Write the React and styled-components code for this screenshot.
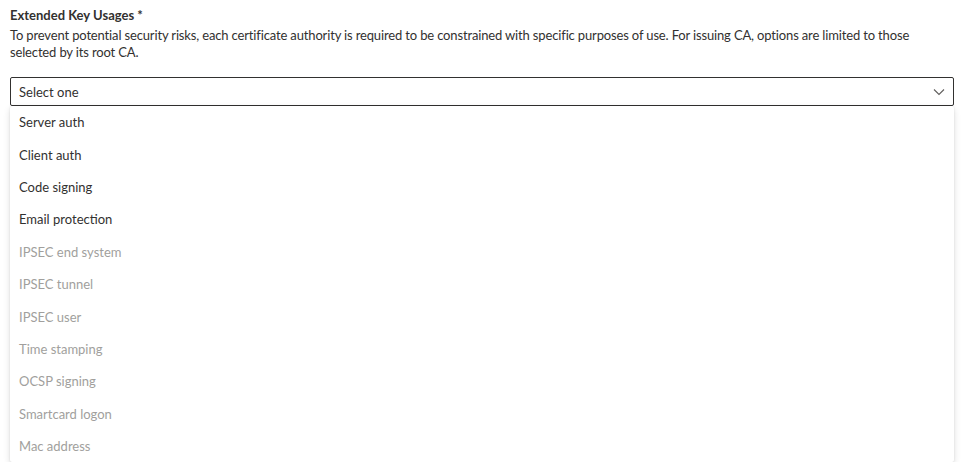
import React from "react";
import styled, { createGlobalStyle } from "styled-components";

const GlobalStyle = createGlobalStyle`
  body {
    margin: 0;
    background: #fff;
    font-family: Lato, "Open Sans", Arial, sans-serif;
    color: #323130;
  }
`;

const options = [
  { label: "Server auth", enabled: true },
  { label: "Client auth", enabled: true },
  { label: "Code signing", enabled: true },
  { label: "Email protection", enabled: true },
  { label: "IPSEC end system" },
  { label: "IPSEC tunnel" },
  { label: "IPSEC user" },
  { label: "Time stamping" },
  { label: "OCSP signing" },
  { label: "Smartcard logon" },
  { label: "Mac address" },
];

const App = () => {
  return (
    <>
      <GlobalStyle />
      <Field>
        <Label>Extended Key Usages *</Label>
        <Description>
          To prevent potential security risks, each certificate authority is required to be constrained with specific purposes of use. For issuing CA, options are limited to those selected by its root CA.
        </Description>
        <SelectBox>
          <Placeholder>Select one</Placeholder>
          <svg width="12" height="8" viewBox="0 0 12 8">
            <path d="M1 1.5 L6 6.5 L11 1.5" fill="none" stroke="#605e5c" strokeWidth="1.1" />
          </svg>
        </SelectBox>
        <Menu>
          {options.map((o) => (
            <Option key={o.label} disabled={!o.enabled}>
              {o.label}
            </Option>
          ))}
        </Menu>
      </Field>
    </>
  );
};

const Field = styled.div`
  display: flex;
  flex-direction: column;
  padding: 6px 8px 0 10px;
  width: 944px;
`;

const Label = styled.label`
  font-size: 13px;
  font-weight: 700;
  line-height: 18px;
  margin-bottom: 3px;
`;

const Description = styled.p`
  margin: 0 0 16px;
  font-size: 13px;
  line-height: 17px;
  letter-spacing: -0.15px;
  max-width: 930px;
`;

const SelectBox = styled.div`
  display: flex;
  align-items: center;
  justify-content: space-between;
  height: 27px;
  border: 1px solid #323130;
  border-radius: 2px;
  padding: 0 8px;
  font-size: 13px;
`;

const Placeholder = styled.span`
  color: #323130;
`;

const Menu = styled.ul`
  list-style: none;
  margin: 0;
  padding: 0;
  background: #fff;
  box-shadow: 0 3px 7px rgba(0, 0, 0, 0.13), 0 0 2px rgba(0, 0, 0, 0.11);
  border-radius: 2px;
`;

const Option = styled.li`
  display: flex;
  align-items: center;
  height: 32.4px;
  padding: 0 9px;
  font-size: 13px;
  color: ${(p) => (p.disabled ? "#a19f9d" : "#323130")};
`;

export default App;
